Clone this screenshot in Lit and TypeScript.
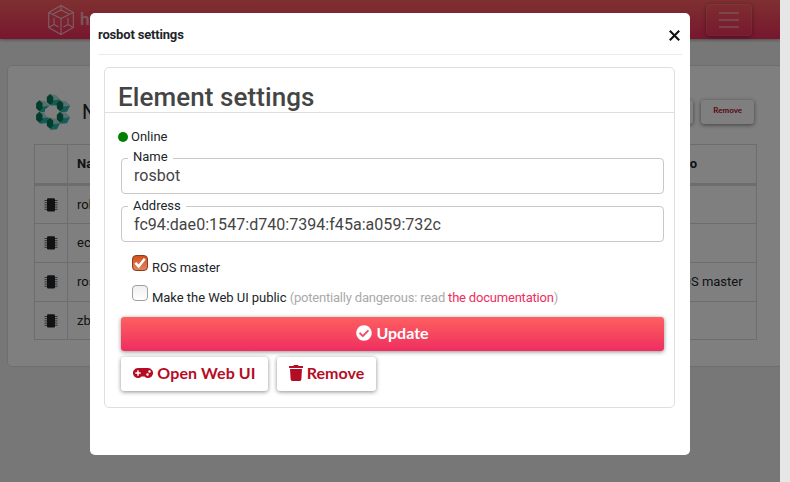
import { LitElement, html, css, svg } from "lit";
import { customElement } from "lit/decorators.js";

const hexCube = html`<svg class="cube" viewBox="0 0 28 32" fill="none" stroke="#fff" stroke-width="1.1" stroke-linejoin="round">
  <path d="M14 1.5 26.3 8.5V23.5L14 30.5 1.7 23.5V8.5Z" />
  <path d="M1.7 8.5 14 14.5 26.3 8.5M14 14.5V30.5M14 1.5V7M1.7 23.5 7 20.5M26.3 23.5 21 20.5M5.5 10.3 14 6 22.5 10.3M7 14V20.5L11.5 23M21 14V20.5L16.5 23" />
</svg>`;

const blocks = [
  [16, 5.5], [26, 11.7], [5.3, 11.7], [5.3, 23.3], [26, 23.3], [16, 29.3],
];
const ringLogo = html`<svg class="ring" viewBox="0 0 36 36">
  ${blocks.map(([x, y]) => svg`
    <path d="M${x} ${y - 5.5}l6 1 4 4-1 3-6-1z" fill="#b5dedd" />
    <path d="M${x + 2} ${y + 1}l8-1-3 6-7 .5z" fill="#2db7ad" />
    <path d="M${x} ${y - 5.5}l3.2 3v5l-3.2 3-3.2-3v-5z" fill="#007a58" />`)}
  <path d="M16 11.5l5 0 2 3v6l-3 3h-6l-3-3v-5z" fill="#fff" />
</svg>`;

const chip = html`<svg class="chip" viewBox="0 0 14 14">
  <path d="M.5 2.5H13.5M.5 4.7H13.5M.5 6.9H13.5M.5 9.1H13.5M.5 11.3H13.5" stroke="#4d5358" stroke-width=".9" />
  <rect x="3" y="0.3" width="8" height="13.2" rx="1.2" fill="#212529" />
</svg>`;

const faCheck = html`<svg class="ic check" viewBox="0 0 512 512"><path d="M504 256c0 136.967-111.033 248-248 248S8 392.967 8 256 119.033 8 256 8s248 111.033 248 248zM227.314 387.314l184-184c6.248-6.248 6.248-16.379 0-22.627l-22.627-22.627c-6.248-6.249-16.379-6.249-22.628 0L216 308.118l-70.059-70.059c-6.248-6.248-16.379-6.248-22.628 0l-22.627 22.627c-6.248 6.248-6.248 16.379 0 22.627l104 104c6.249 6.249 16.379 6.249 22.628.001z" /></svg>`;
const faPad = html`<svg class="ic pad" viewBox="0 0 640 512"><path d="M480.07 96H160a160 160 0 1 0 114.24 272h91.52A160 160 0 1 0 480.07 96zM248 268a12 12 0 0 1-12 12h-52v52a12 12 0 0 1-12 12h-24a12 12 0 0 1-12-12v-52H84a12 12 0 0 1-12-12v-24a12 12 0 0 1 12-12h52v-52a12 12 0 0 1 12-12h24a12 12 0 0 1 12 12v52h52a12 12 0 0 1 12 12zm216 76a40 40 0 1 1 40-40 40 40 0 0 1-40 40zm64-96a40 40 0 1 1 40-40 40 40 0 0 1-40 40z" /></svg>`;
const faTrash = html`<svg class="ic trash" viewBox="0 0 448 512"><path d="M432 32H312l-9.4-18.7A24 24 0 0 0 281.1 0H166.8a23.72 23.72 0 0 0-21.4 13.3L136 32H16A16 16 0 0 0 0 48v32a16 16 0 0 0 16 16h416a16 16 0 0 0 16-16V48a16 16 0 0 0-16-16zM53.2 467a48 48 0 0 0 47.9 45h245.8a48 48 0 0 0 47.9-45L416 128H32z" /></svg>`;

@customElement("network-page")
class NetworkPage extends LitElement {
  static styles = css`
    :host { display: block; height: 482px; background: #efefef; font: 13px/20px Roboto, sans-serif; color: #212529; overflow: hidden; }
    * { box-sizing: border-box; }
    .bar { height: 39px; display: flex; align-items: center; padding: 0 28px 0 47px; background: linear-gradient(#fe6060, #ee2e5f); box-shadow: 0 1px 3px rgba(0,0,0,.35); }
    .cube { width: 28px; height: 32px; opacity: .65; }
    .brand { flex: 1; margin-left: 5px; padding-bottom: 2px; font: 700 17px/20px Lato, sans-serif; color: #fff; opacity: .55; }
    .menu { width: 46px; height: 32px; border: 1px solid rgba(255,255,255,.1); border-radius: 4px; display: flex; flex-direction: column; align-items: center; justify-content: center; gap: 5px; box-shadow: 0 1px 4px rgba(0,0,0,.4); }
    .menu i { width: 20px; height: 2px; background: rgba(255,255,255,.35); }
    .card { margin: 26px -10px 0 7px; height: 302px; border: 1px solid #dcdcdc; border-radius: 5px; background: #fff; padding: 28px 32px 0 26px; }
    .head { display: flex; align-items: center; height: 36px; }
    .ring { width: 36px; height: 36px; }
    .name { flex: 1; margin-left: 12px; font-size: 20px; line-height: 36px; }
    .btn { height: 24px; border-radius: 3px; background: #fff; box-shadow: 0 1px 4px rgba(0,0,0,.5); font: 700 8px/21px Lato, sans-serif; color: #b50c25; padding: 0 12px; margin-right: 3px; margin-left: 5px; }
    table { margin-top: 14px; width: 723px; border-collapse: collapse; table-layout: fixed; }
    td, th { border: 1px solid #d8dbde; padding: 0 9px; text-align: left; height: 39px; font-weight: 400; white-space: nowrap; }
    th { font-weight: 700; border-bottom: 3px solid #d8dbde; height: 40px; }
    tr:last-child td { height: 38px; }
    .c1 { width: 33px; } .c3 { width: 92px; }
    .chip { width: 14px; height: 14px; display: block; margin-left: -.5px; }
  `;
  rows = [["robot", ""], ["echo", ""], ["rosbot", "ROS master"], ["zbox", ""]];
  render() {
    return html`
      <div class="bar">${hexCube}<span class="brand">husarnet</span><div class="menu"><i></i><i></i><i></i></div></div>
      <div class="card">
        <div class="head">${ringLogo}<span class="name">Net</span><span class="btn">Edit</span><span class="btn">Remove</span></div>
        <table>
          <colgroup><col class="c1" /><col /><col class="c3" /></colgroup>
          <tr><th></th><th>Name</th><th>Info</th></tr>
          ${this.rows.map(([n, i]) => html`<tr><td>${chip}</td><td>${n}</td><td>${i}</td></tr>`)}
        </table>
      </div>`;
  }
}

@customElement("settings-dialog")
class SettingsDialog extends LitElement {
  static styles = css`
    :host { display: block; width: 600px; height: 442px; border-radius: 5px; background: #fff; padding: 0 8px; box-sizing: border-box; font: 13px/20px Roboto, sans-serif; color: #212529; }
    * { box-sizing: border-box; }
    .top { height: 42px; border-bottom: 1px solid #e9ebed; display: flex; align-items: center; justify-content: space-between; font-weight: 700; padding: 2px 2px 0 0; letter-spacing: -.17px; }
    .x { width: 11px; height: 11px; stroke: #111; stroke-width: 2.1; fill: none; margin: 2px 0 0; }
    .panel { margin: 12px 7px 0 6px; height: 341px; border: 1px solid #dfdfdf; border-radius: 5px; }
    h2 { margin: 0; height: 45px; border-bottom: 1px solid #dfdfdf; padding: 13px 0 0 13px; font: 500 26px/32px Roboto, sans-serif; letter-spacing: .08px; color: #444; }
    .status { display: flex; align-items: center; gap: 3px; margin: 14px 0 0 13px; height: 20px; }
    .dot { width: 10px; height: 10px; border-radius: 50%; background: #008000; }
    fieldset { margin: 0 10px 0 16px; padding: 0 0 0 12px; height: 45px; min-width: 0; border: 1px solid #c8c8c8; border-radius: 4px; font-size: 16px; color: #444; }
    fieldset div { letter-spacing: .04px; }
    legend { padding: 0 5px; margin-left: -6px; font-size: 13px; line-height: 18px; color: #212529; height: 18px; }
    .first { margin-top: 1px; height: 46px; }
    .first legend { height: 20px; }
    .first div { margin-top: -2px; }
    .second { margin-top: 3px; }
    .opt { display: flex; align-items: flex-start; margin-left: 27px; height: 30px; gap: 4px; }
    .opts { margin-top: 13px; }
    .opt span { line-height: 25px; white-space: nowrap; }
    .opt > span { letter-spacing: -.04px; }
    .box { width: 16px; height: 16px; border-radius: 4px; border: 1px solid #a0a0a0; background: linear-gradient(#f0f0f0, #fff); display: block; }
    .box.on { border-color: #8c3d1d; background: linear-gradient(#d4511e, #e18560); }
    .box svg { display: block; width: 14px; height: 14px; fill: none; stroke: #fff; stroke-width: 2.5; }
    .muted { color: #aaa; letter-spacing: -.2px; } a { color: #ee2e5f; }
    .btn { height: 34px; border-radius: 3px; display: flex; align-items: center; justify-content: center; gap: 4px; font: 700 16px/31px Lato, sans-serif; color: #b50c25; background: #fff; box-shadow: 0 1px 4px rgba(0,0,0,.45); }
    .btn span { height: 34px; }
    .update { margin: 2px 10px 6px 16px; color: #fff; background: linear-gradient(#fe6060, #ee2e5f); }
    .row { display: flex; gap: 9px; margin-left: 16px; }
    .open { width: 147px; letter-spacing: .1px; } .remove { width: 99px; }
    .ic { fill: currentColor; height: 16px; display: block; margin-bottom: 2px; }
    .check { width: 16px; } .pad { width: 20px; } .trash { width: 14px; }
  `;
  render() {
    return html`
      <div class="top"><span>rosbot settings</span><svg class="x" viewBox="0 0 11 11"><path d="M.8.8 10.2 10.2M10.2.8.8 10.2" /></svg></div>
      <div class="panel">
        <h2>Element settings</h2>
        <div class="status"><span class="dot"></span>Online</div>
        <fieldset class="first"><legend>Name</legend><div>rosbot</div></fieldset>
        <fieldset class="second"><legend>Address</legend><div>fc94:dae0:1547:d740:7394:f45a:a059:732c</div></fieldset>
        <div class="opts">
          <div class="opt"><i class="box on"><svg viewBox="0 0 14 14"><path d="M2.3 6.8 5.7 10.4 11.8 2.8" /></svg></i><span>ROS master</span></div>
          <div class="opt"><i class="box"></i><span>Make the Web UI public <span class="muted">(potentially dangerous: read <a>the documentation</a>)</span></span></div>
        </div>
        <div class="btn update">${faCheck}<span>Update</span></div>
        <div class="row"><div class="btn open">${faPad}<span>Open Web UI</span></div><div class="btn remove">${faTrash}<span>Remove</span></div></div>
      </div>`;
  }
}

@customElement("app-root")
class AppRoot extends LitElement {
  static styles = css`
    :host { display: block; position: relative; height: 482px; background: #e6e6e6; overflow: hidden; }
    network-page { width: 780px; }
    .overlay { position: absolute; top: 0; left: 0; width: 780px; height: 482px; padding-top: 13px; box-sizing: border-box; background: rgba(0,0,0,.5); display: flex; justify-content: center; align-items: flex-start; }
  `;
  render() {
    return html`<network-page></network-page><div class="overlay"><settings-dialog></settings-dialog></div>`;
  }
}
